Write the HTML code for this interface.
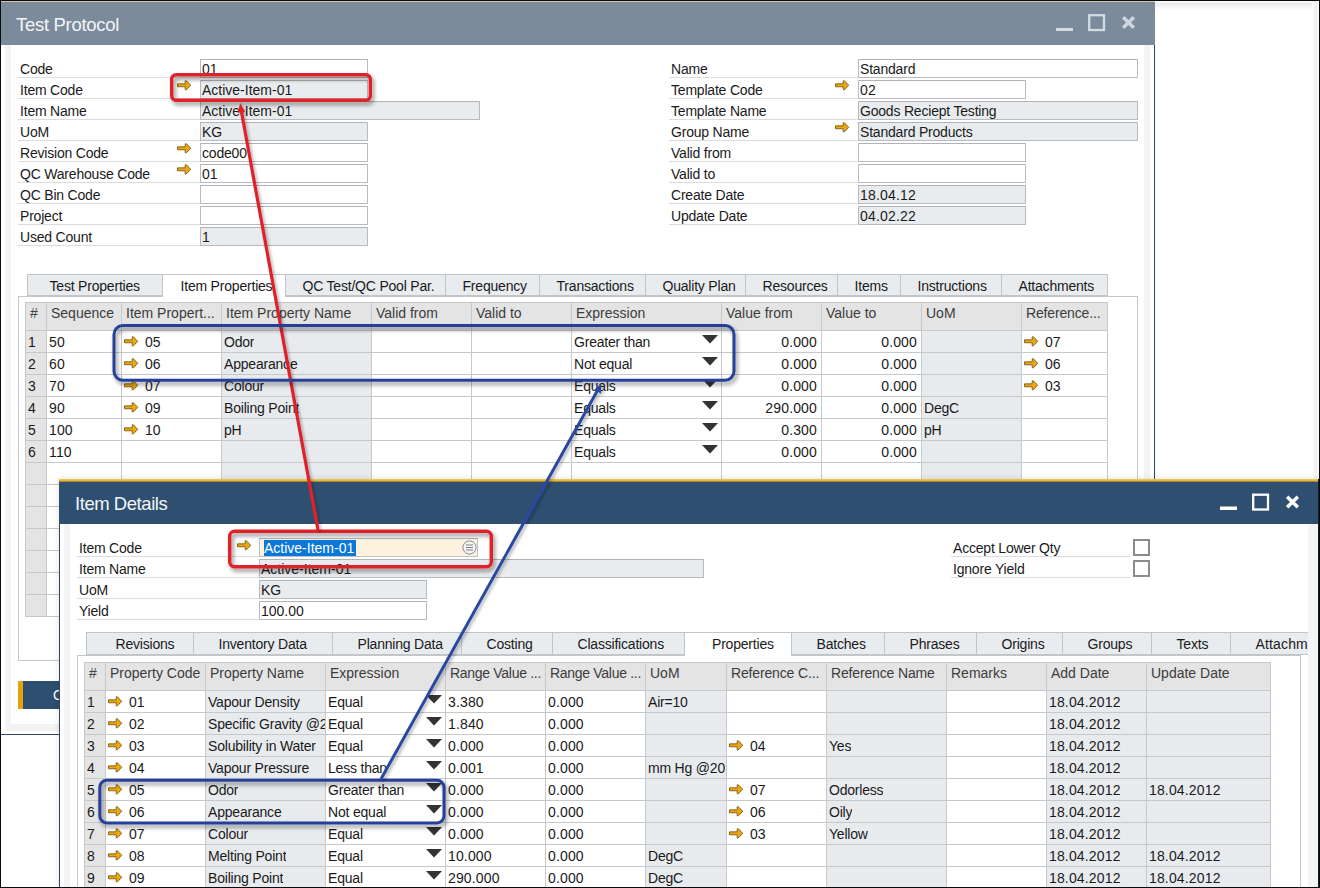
<!DOCTYPE html>
<html><head><meta charset="utf-8"><title>Test Protocol</title>
<style>
html,body{margin:0;padding:0;background:#fff;}
body{width:1320px;height:888px;overflow:hidden;position:relative;font-family:"Liberation Sans",Arial,sans-serif;}
#root{position:absolute;left:0;top:0;width:1320px;height:888px;overflow:hidden;}
#root div{position:absolute;box-sizing:border-box;}
.t{position:absolute;white-space:nowrap;display:block;}
.lk{position:absolute;display:block;overflow:visible;}
.in{border:1px solid #b8babd;border-top-color:#b0b2b5;border-radius:1px;background:#fff;}
.in.g{background:#e9ecee;}
.ul{background:#dcdcdc;height:1px;}
.tab{background:#e9ecef;border:1px solid #c2c5c8;}
.tab.a{background:#fff;border-bottom:none;}
svg.ov{position:absolute;left:0;top:0;}
</style></head><body><div id="root">

<div style="left:0px;top:0px;width:1320px;height:888px;background:#fff;"></div>
<div style="left:1155px;top:1px;width:164px;height:9px;background:linear-gradient(#fff 0,#ececec 30%,#f4f4f4 60%,#fff 100%);"></div>
<div style="left:1312px;top:1px;width:7px;height:478px;background:linear-gradient(90deg,#fff 0,#f0f0f0 60%,#fff 100%);"></div>
<div style="left:0px;top:0px;width:1155px;height:735px;background:#fff;"></div>
<div style="left:5px;top:45px;width:6px;height:686px;background:#f3f3f3;"></div>
<div style="left:1144px;top:45px;width:6px;height:686px;background:#f3f3f3;"></div>
<div style="left:5px;top:724px;width:1145px;height:7px;background:#f3f3f3;"></div>
<div style="left:0px;top:0px;width:1px;height:735px;background:#1c1c1c;"></div>
<div style="left:1154px;top:45px;width:1px;height:690px;background:#2d4868;"></div>
<div style="left:0px;top:734px;width:1155px;height:1px;background:#2d4868;"></div>
<div style="left:0px;top:2px;width:1155px;height:43px;background:#7b8b9b;"></div>
<span class="t" style="left:16px;top:14.09px;font-size:18.5px;line-height:21px;color:#f2f5f8;letter-spacing:-0.3px;">Test Protocol</span>
<svg class="lk" style="left:1050px;top:8px" width="95" height="30" viewBox="1050 8 95 30"><rect x="1056" y="28" width="17" height="3" fill="#d3dbe3"/><rect x="1089.2" y="15.2" width="14.8" height="14.8" fill="none" stroke="#d3dbe3" stroke-width="2.3"/><path d="M1123.2 17.2 L1133.8 27.8 M1133.8 17.2 L1123.2 27.8" stroke="#ccd5de" stroke-width="3.5" fill="none"/></svg>
<span class="t" style="left:20px;top:61.15px;font-size:14px;line-height:16px;color:#1a1a1a;letter-spacing:-0.2px;">Code</span>
<div class="ul" style="left:18px;top:77px;width:182px;height:1px;"></div>
<div class="in" style="left:200px;top:59px;width:168px;height:19px;"></div>
<span class="t" style="left:202px;top:61.15px;font-size:14px;line-height:16px;color:#1a1a1a;letter-spacing:0px;">01</span>
<span class="t" style="left:20px;top:82.15px;font-size:14px;line-height:16px;color:#1a1a1a;letter-spacing:-0.2px;">Item Code</span>
<div class="ul" style="left:18px;top:98px;width:182px;height:1px;"></div>
<div class="in g" style="left:200px;top:80px;width:168px;height:19px;"></div>
<span class="t" style="left:202px;top:82.15px;font-size:14px;line-height:16px;color:#1a1a1a;letter-spacing:0px;">Active-Item-01</span>
<svg class="lk" style="left:176.5px;top:79.7px" width="15" height="11" viewBox="0 0 15 11"><path d="M0.5 3.85 H8.2 V0.8 H9.4 L13.7 5.3 L9.4 9.8 H8.2 V6.75 H0.5 Z" fill="#eda610" stroke="#7a5c14" stroke-width="0.9" stroke-linejoin="round"/></svg>
<span class="t" style="left:20px;top:103.15px;font-size:14px;line-height:16px;color:#1a1a1a;letter-spacing:-0.2px;">Item Name</span>
<div class="ul" style="left:18px;top:119px;width:182px;height:1px;"></div>
<div class="in g" style="left:200px;top:101px;width:280px;height:19px;"></div>
<span class="t" style="left:202px;top:103.15px;font-size:14px;line-height:16px;color:#1a1a1a;letter-spacing:0px;">Active-Item-01</span>
<span class="t" style="left:20px;top:124.15px;font-size:14px;line-height:16px;color:#1a1a1a;letter-spacing:-0.2px;">UoM</span>
<div class="ul" style="left:18px;top:140px;width:182px;height:1px;"></div>
<div class="in g" style="left:200px;top:122px;width:168px;height:19px;"></div>
<span class="t" style="left:202px;top:124.15px;font-size:14px;line-height:16px;color:#1a1a1a;letter-spacing:-0.2px;">KG</span>
<span class="t" style="left:20px;top:145.15px;font-size:14px;line-height:16px;color:#1a1a1a;letter-spacing:-0.2px;">Revision Code</span>
<div class="ul" style="left:18px;top:161px;width:182px;height:1px;"></div>
<div class="in" style="left:200px;top:143px;width:168px;height:19px;"></div>
<span class="t" style="left:202px;top:145.15px;font-size:14px;line-height:16px;color:#1a1a1a;letter-spacing:-0.2px;">code00</span>
<svg class="lk" style="left:176.5px;top:142.7px" width="15" height="11" viewBox="0 0 15 11"><path d="M0.5 3.85 H8.2 V0.8 H9.4 L13.7 5.3 L9.4 9.8 H8.2 V6.75 H0.5 Z" fill="#eda610" stroke="#7a5c14" stroke-width="0.9" stroke-linejoin="round"/></svg>
<span class="t" style="left:20px;top:166.15px;font-size:14px;line-height:16px;color:#1a1a1a;letter-spacing:-0.2px;">QC Warehouse Code</span>
<div class="ul" style="left:18px;top:182px;width:182px;height:1px;"></div>
<div class="in" style="left:200px;top:164px;width:168px;height:19px;"></div>
<span class="t" style="left:202px;top:166.15px;font-size:14px;line-height:16px;color:#1a1a1a;letter-spacing:0px;">01</span>
<svg class="lk" style="left:176.5px;top:163.7px" width="15" height="11" viewBox="0 0 15 11"><path d="M0.5 3.85 H8.2 V0.8 H9.4 L13.7 5.3 L9.4 9.8 H8.2 V6.75 H0.5 Z" fill="#eda610" stroke="#7a5c14" stroke-width="0.9" stroke-linejoin="round"/></svg>
<span class="t" style="left:20px;top:187.15px;font-size:14px;line-height:16px;color:#1a1a1a;letter-spacing:-0.2px;">QC Bin Code</span>
<div class="ul" style="left:18px;top:203px;width:182px;height:1px;"></div>
<div class="in" style="left:200px;top:185px;width:168px;height:19px;"></div>
<span class="t" style="left:20px;top:208.15px;font-size:14px;line-height:16px;color:#1a1a1a;letter-spacing:-0.2px;">Project</span>
<div class="ul" style="left:18px;top:224px;width:182px;height:1px;"></div>
<div class="in" style="left:200px;top:206px;width:168px;height:19px;"></div>
<span class="t" style="left:20px;top:229.15px;font-size:14px;line-height:16px;color:#1a1a1a;letter-spacing:-0.2px;">Used Count</span>
<div class="ul" style="left:18px;top:245px;width:182px;height:1px;"></div>
<div class="in g" style="left:200px;top:227px;width:168px;height:19px;"></div>
<span class="t" style="left:202px;top:229.15px;font-size:14px;line-height:16px;color:#1a1a1a;letter-spacing:0px;">1</span>
<span class="t" style="left:671px;top:61.15px;font-size:14px;line-height:16px;color:#1a1a1a;letter-spacing:-0.2px;">Name</span>
<div class="ul" style="left:669px;top:77px;width:189px;height:1px;"></div>
<div class="in" style="left:858px;top:59px;width:280px;height:19px;"></div>
<span class="t" style="left:860px;top:61.15px;font-size:14px;line-height:16px;color:#1a1a1a;letter-spacing:-0.2px;">Standard</span>
<span class="t" style="left:671px;top:82.15px;font-size:14px;line-height:16px;color:#1a1a1a;letter-spacing:-0.2px;">Template Code</span>
<div class="ul" style="left:669px;top:98px;width:189px;height:1px;"></div>
<div class="in" style="left:858px;top:80px;width:168px;height:19px;"></div>
<span class="t" style="left:860px;top:82.15px;font-size:14px;line-height:16px;color:#1a1a1a;letter-spacing:0.2px;">02</span>
<svg class="lk" style="left:834.5px;top:79.7px" width="15" height="11" viewBox="0 0 15 11"><path d="M0.5 3.85 H8.2 V0.8 H9.4 L13.7 5.3 L9.4 9.8 H8.2 V6.75 H0.5 Z" fill="#eda610" stroke="#7a5c14" stroke-width="0.9" stroke-linejoin="round"/></svg>
<span class="t" style="left:671px;top:103.15px;font-size:14px;line-height:16px;color:#1a1a1a;letter-spacing:-0.2px;">Template Name</span>
<div class="ul" style="left:669px;top:119px;width:189px;height:1px;"></div>
<div class="in g" style="left:858px;top:101px;width:280px;height:19px;"></div>
<span class="t" style="left:860px;top:103.15px;font-size:14px;line-height:16px;color:#1a1a1a;letter-spacing:-0.2px;">Goods Reciept Testing</span>
<span class="t" style="left:671px;top:124.15px;font-size:14px;line-height:16px;color:#1a1a1a;letter-spacing:-0.2px;">Group Name</span>
<div class="ul" style="left:669px;top:140px;width:189px;height:1px;"></div>
<div class="in g" style="left:858px;top:122px;width:280px;height:19px;"></div>
<span class="t" style="left:860px;top:124.15px;font-size:14px;line-height:16px;color:#1a1a1a;letter-spacing:-0.2px;">Standard Products</span>
<svg class="lk" style="left:834.5px;top:121.7px" width="15" height="11" viewBox="0 0 15 11"><path d="M0.5 3.85 H8.2 V0.8 H9.4 L13.7 5.3 L9.4 9.8 H8.2 V6.75 H0.5 Z" fill="#eda610" stroke="#7a5c14" stroke-width="0.9" stroke-linejoin="round"/></svg>
<span class="t" style="left:671px;top:145.15px;font-size:14px;line-height:16px;color:#1a1a1a;letter-spacing:-0.2px;">Valid from</span>
<div class="ul" style="left:669px;top:161px;width:189px;height:1px;"></div>
<div class="in" style="left:858px;top:143px;width:168px;height:19px;"></div>
<span class="t" style="left:671px;top:166.15px;font-size:14px;line-height:16px;color:#1a1a1a;letter-spacing:-0.2px;">Valid to</span>
<div class="ul" style="left:669px;top:182px;width:189px;height:1px;"></div>
<div class="in" style="left:858px;top:164px;width:168px;height:19px;"></div>
<span class="t" style="left:671px;top:187.15px;font-size:14px;line-height:16px;color:#1a1a1a;letter-spacing:-0.2px;">Create Date</span>
<div class="ul" style="left:669px;top:203px;width:189px;height:1px;"></div>
<div class="in g" style="left:858px;top:185px;width:168px;height:19px;"></div>
<span class="t" style="left:860px;top:187.15px;font-size:14px;line-height:16px;color:#1a1a1a;letter-spacing:0.2px;">18.04.12</span>
<span class="t" style="left:671px;top:208.15px;font-size:14px;line-height:16px;color:#1a1a1a;letter-spacing:-0.2px;">Update Date</span>
<div class="ul" style="left:669px;top:224px;width:189px;height:1px;"></div>
<div class="in g" style="left:858px;top:206px;width:168px;height:19px;"></div>
<span class="t" style="left:860px;top:208.15px;font-size:14px;line-height:16px;color:#1a1a1a;letter-spacing:0.2px;">04.02.22</span>
<div style="left:18px;top:296px;width:1120px;height:365px;border:1px solid #c4c6c8;background:#fff;"></div>
<div class="tab" style="left:27px;top:274px;width:136px;height:22px;"></div>
<div class="tab a" style="left:162px;top:274px;width:124px;height:23px;"></div>
<div class="tab" style="left:285px;top:274px;width:161px;height:22px;"></div>
<div class="tab" style="left:445px;top:274px;width:95px;height:22px;"></div>
<div class="tab" style="left:539px;top:274px;width:107px;height:22px;"></div>
<div class="tab" style="left:645px;top:274px;width:101px;height:22px;"></div>
<div class="tab" style="left:745px;top:274px;width:93px;height:22px;"></div>
<div class="tab" style="left:837px;top:274px;width:64px;height:22px;"></div>
<div class="tab" style="left:900px;top:274px;width:102px;height:22px;"></div>
<div class="tab" style="left:1001px;top:274px;width:107px;height:22px;"></div>
<span class="t" style="left:49.5px;top:278.15px;font-size:14px;line-height:16px;color:#1a1a1a;letter-spacing:-0.2px;">Test Properties</span>
<span class="t" style="left:180.5px;top:278.15px;font-size:14px;line-height:16px;color:#1a1a1a;letter-spacing:-0.2px;">Item Properties</span>
<span class="t" style="left:302.5px;top:278.15px;font-size:14px;line-height:16px;color:#1a1a1a;letter-spacing:-0.2px;">QC Test/QC Pool Par.</span>
<span class="t" style="left:462.5px;top:278.15px;font-size:14px;line-height:16px;color:#1a1a1a;letter-spacing:-0.2px;">Frequency</span>
<span class="t" style="left:556.5px;top:278.15px;font-size:14px;line-height:16px;color:#1a1a1a;letter-spacing:-0.2px;">Transactions</span>
<span class="t" style="left:662.5px;top:278.15px;font-size:14px;line-height:16px;color:#1a1a1a;letter-spacing:-0.2px;">Quality Plan</span>
<span class="t" style="left:762.5px;top:278.15px;font-size:14px;line-height:16px;color:#1a1a1a;letter-spacing:-0.2px;">Resources</span>
<span class="t" style="left:854.5px;top:278.15px;font-size:14px;line-height:16px;color:#1a1a1a;letter-spacing:-0.2px;">Items</span>
<span class="t" style="left:917.5px;top:278.15px;font-size:14px;line-height:16px;color:#1a1a1a;letter-spacing:-0.2px;">Instructions</span>
<span class="t" style="left:1018.5px;top:278.15px;font-size:14px;line-height:16px;color:#1a1a1a;letter-spacing:-0.2px;">Attachments</span>
<div style="left:25px;top:330px;width:21px;height:286px;background:#e4e4e4;"></div>
<div style="left:46px;top:330px;width:75px;height:286px;background:#fff;"></div>
<div style="left:121px;top:330px;width:100px;height:286px;background:#fff;"></div>
<div style="left:221px;top:330px;width:150px;height:286px;background:#e8ebee;"></div>
<div style="left:371px;top:330px;width:100px;height:286px;background:#fff;"></div>
<div style="left:471px;top:330px;width:100px;height:286px;background:#fff;"></div>
<div style="left:571px;top:330px;width:150px;height:286px;background:#fff;"></div>
<div style="left:721px;top:330px;width:100px;height:286px;background:#fff;"></div>
<div style="left:821px;top:330px;width:100px;height:286px;background:#fff;"></div>
<div style="left:921px;top:330px;width:100px;height:286px;background:#e8ebee;"></div>
<div style="left:1021px;top:330px;width:86px;height:286px;background:#fff;"></div>
<div style="left:25px;top:302px;width:1082px;height:28px;background:#e4e4e4;"></div>
<div style="left:25px;top:302px;width:1px;height:314px;background:#c6c8ca;"></div>
<div style="left:46px;top:302px;width:1px;height:314px;background:#c6c8ca;"></div>
<div style="left:121px;top:302px;width:1px;height:314px;background:#c6c8ca;"></div>
<div style="left:221px;top:302px;width:1px;height:314px;background:#c6c8ca;"></div>
<div style="left:371px;top:302px;width:1px;height:314px;background:#c6c8ca;"></div>
<div style="left:471px;top:302px;width:1px;height:314px;background:#c6c8ca;"></div>
<div style="left:571px;top:302px;width:1px;height:314px;background:#c6c8ca;"></div>
<div style="left:721px;top:302px;width:1px;height:314px;background:#c6c8ca;"></div>
<div style="left:821px;top:302px;width:1px;height:314px;background:#c6c8ca;"></div>
<div style="left:921px;top:302px;width:1px;height:314px;background:#c6c8ca;"></div>
<div style="left:1021px;top:302px;width:1px;height:314px;background:#c6c8ca;"></div>
<div style="left:1107px;top:302px;width:1px;height:314px;background:#c6c8ca;"></div>
<div style="left:25px;top:302px;width:1083px;height:1px;background:#c6c8ca;"></div>
<div style="left:25px;top:330px;width:1083px;height:1px;background:#c6c8ca;"></div>
<div style="left:25px;top:352px;width:1083px;height:1px;background:#c6c8ca;"></div>
<div style="left:25px;top:374px;width:1083px;height:1px;background:#c6c8ca;"></div>
<div style="left:25px;top:396px;width:1083px;height:1px;background:#c6c8ca;"></div>
<div style="left:25px;top:418px;width:1083px;height:1px;background:#c6c8ca;"></div>
<div style="left:25px;top:440px;width:1083px;height:1px;background:#c6c8ca;"></div>
<div style="left:25px;top:462px;width:1083px;height:1px;background:#c6c8ca;"></div>
<div style="left:25px;top:484px;width:1083px;height:1px;background:#c6c8ca;"></div>
<div style="left:25px;top:506px;width:1083px;height:1px;background:#c6c8ca;"></div>
<div style="left:25px;top:528px;width:1083px;height:1px;background:#c6c8ca;"></div>
<div style="left:25px;top:550px;width:1083px;height:1px;background:#c6c8ca;"></div>
<div style="left:25px;top:572px;width:1083px;height:1px;background:#c6c8ca;"></div>
<div style="left:25px;top:594px;width:1083px;height:1px;background:#c6c8ca;"></div>
<div style="left:25px;top:616px;width:1083px;height:1px;background:#c6c8ca;"></div>
<span class="t" style="left:30px;top:305.15px;font-size:14px;line-height:16px;color:#444;letter-spacing:-0.2px;">#</span>
<span class="t" style="left:51px;top:305.15px;font-size:14px;line-height:16px;color:#3c3c3c;letter-spacing:0px;">Sequence</span>
<span class="t" style="left:126px;top:305.15px;font-size:14px;line-height:16px;color:#3c3c3c;letter-spacing:0px;">Item Propert...</span>
<span class="t" style="left:226px;top:305.15px;font-size:14px;line-height:16px;color:#3c3c3c;letter-spacing:0px;">Item Property Name</span>
<span class="t" style="left:376px;top:305.15px;font-size:14px;line-height:16px;color:#3c3c3c;letter-spacing:0px;">Valid from</span>
<span class="t" style="left:476px;top:305.15px;font-size:14px;line-height:16px;color:#3c3c3c;letter-spacing:0px;">Valid to</span>
<span class="t" style="left:576px;top:305.15px;font-size:14px;line-height:16px;color:#3c3c3c;letter-spacing:0px;">Expression</span>
<span class="t" style="left:726px;top:305.15px;font-size:14px;line-height:16px;color:#3c3c3c;letter-spacing:0px;">Value from</span>
<span class="t" style="left:826px;top:305.15px;font-size:14px;line-height:16px;color:#3c3c3c;letter-spacing:0px;">Value to</span>
<span class="t" style="left:926px;top:305.15px;font-size:14px;line-height:16px;color:#3c3c3c;letter-spacing:0px;">UoM</span>
<span class="t" style="left:1026px;top:305.15px;font-size:14px;line-height:16px;color:#3c3c3c;letter-spacing:-0.15px;">Reference...</span>
<span class="t" style="left:28px;top:333.65px;font-size:14px;line-height:16px;color:#1a1a1a;letter-spacing:0.15px;max-width:18px;overflow:hidden;">1</span>
<span class="t" style="left:49px;top:333.65px;font-size:14px;line-height:16px;color:#1a1a1a;letter-spacing:0.15px;max-width:72px;overflow:hidden;">50</span>
<svg class="lk" style="left:124px;top:335.5px" width="15" height="11" viewBox="0 0 15 11"><path d="M0.5 3.85 H8.2 V0.8 H9.4 L13.7 5.3 L9.4 9.8 H8.2 V6.75 H0.5 Z" fill="#eda610" stroke="#7a5c14" stroke-width="0.9" stroke-linejoin="round"/></svg>
<span class="t" style="left:145px;top:333.65px;font-size:14px;line-height:16px;color:#1a1a1a;letter-spacing:0px;">05</span>
<span class="t" style="left:224px;top:333.65px;font-size:14px;line-height:16px;color:#1a1a1a;letter-spacing:-0.2px;max-width:147px;overflow:hidden;">Odor</span>
<span class="t" style="left:574px;top:333.65px;font-size:14px;line-height:16px;color:#1a1a1a;letter-spacing:-0.2px;max-width:147px;overflow:hidden;">Greater than</span>
<svg class="lk" style="left:702px;top:335px" width="16" height="9" viewBox="0 0 16 9"><path d="M0 0 H16 L8 8.6 Z" fill="#333"/></svg>
<span class="t" style="right:503px;top:333.65px;font-size:14px;line-height:16px;color:#1a1a1a;letter-spacing:0.15px;">0.000</span>
<span class="t" style="right:403px;top:333.65px;font-size:14px;line-height:16px;color:#1a1a1a;letter-spacing:0.15px;">0.000</span>
<svg class="lk" style="left:1024px;top:335.5px" width="15" height="11" viewBox="0 0 15 11"><path d="M0.5 3.85 H8.2 V0.8 H9.4 L13.7 5.3 L9.4 9.8 H8.2 V6.75 H0.5 Z" fill="#eda610" stroke="#7a5c14" stroke-width="0.9" stroke-linejoin="round"/></svg>
<span class="t" style="left:1045px;top:333.65px;font-size:14px;line-height:16px;color:#1a1a1a;letter-spacing:0px;">07</span>
<span class="t" style="left:28px;top:355.65px;font-size:14px;line-height:16px;color:#1a1a1a;letter-spacing:0.15px;max-width:18px;overflow:hidden;">2</span>
<span class="t" style="left:49px;top:355.65px;font-size:14px;line-height:16px;color:#1a1a1a;letter-spacing:0.15px;max-width:72px;overflow:hidden;">60</span>
<svg class="lk" style="left:124px;top:357.5px" width="15" height="11" viewBox="0 0 15 11"><path d="M0.5 3.85 H8.2 V0.8 H9.4 L13.7 5.3 L9.4 9.8 H8.2 V6.75 H0.5 Z" fill="#eda610" stroke="#7a5c14" stroke-width="0.9" stroke-linejoin="round"/></svg>
<span class="t" style="left:145px;top:355.65px;font-size:14px;line-height:16px;color:#1a1a1a;letter-spacing:0px;">06</span>
<span class="t" style="left:224px;top:355.65px;font-size:14px;line-height:16px;color:#1a1a1a;letter-spacing:-0.2px;max-width:147px;overflow:hidden;">Appearance</span>
<span class="t" style="left:574px;top:355.65px;font-size:14px;line-height:16px;color:#1a1a1a;letter-spacing:-0.2px;max-width:147px;overflow:hidden;">Not equal</span>
<svg class="lk" style="left:702px;top:357px" width="16" height="9" viewBox="0 0 16 9"><path d="M0 0 H16 L8 8.6 Z" fill="#333"/></svg>
<span class="t" style="right:503px;top:355.65px;font-size:14px;line-height:16px;color:#1a1a1a;letter-spacing:0.15px;">0.000</span>
<span class="t" style="right:403px;top:355.65px;font-size:14px;line-height:16px;color:#1a1a1a;letter-spacing:0.15px;">0.000</span>
<svg class="lk" style="left:1024px;top:357.5px" width="15" height="11" viewBox="0 0 15 11"><path d="M0.5 3.85 H8.2 V0.8 H9.4 L13.7 5.3 L9.4 9.8 H8.2 V6.75 H0.5 Z" fill="#eda610" stroke="#7a5c14" stroke-width="0.9" stroke-linejoin="round"/></svg>
<span class="t" style="left:1045px;top:355.65px;font-size:14px;line-height:16px;color:#1a1a1a;letter-spacing:0px;">06</span>
<span class="t" style="left:28px;top:377.65px;font-size:14px;line-height:16px;color:#1a1a1a;letter-spacing:0.15px;max-width:18px;overflow:hidden;">3</span>
<span class="t" style="left:49px;top:377.65px;font-size:14px;line-height:16px;color:#1a1a1a;letter-spacing:0.15px;max-width:72px;overflow:hidden;">70</span>
<svg class="lk" style="left:124px;top:379.5px" width="15" height="11" viewBox="0 0 15 11"><path d="M0.5 3.85 H8.2 V0.8 H9.4 L13.7 5.3 L9.4 9.8 H8.2 V6.75 H0.5 Z" fill="#eda610" stroke="#7a5c14" stroke-width="0.9" stroke-linejoin="round"/></svg>
<span class="t" style="left:145px;top:377.65px;font-size:14px;line-height:16px;color:#1a1a1a;letter-spacing:0px;">07</span>
<span class="t" style="left:224px;top:377.65px;font-size:14px;line-height:16px;color:#1a1a1a;letter-spacing:-0.2px;max-width:147px;overflow:hidden;">Colour</span>
<span class="t" style="left:574px;top:377.65px;font-size:14px;line-height:16px;color:#1a1a1a;letter-spacing:-0.2px;max-width:147px;overflow:hidden;">Equals</span>
<svg class="lk" style="left:702px;top:379px" width="16" height="9" viewBox="0 0 16 9"><path d="M0 0 H16 L8 8.6 Z" fill="#333"/></svg>
<span class="t" style="right:503px;top:377.65px;font-size:14px;line-height:16px;color:#1a1a1a;letter-spacing:0.15px;">0.000</span>
<span class="t" style="right:403px;top:377.65px;font-size:14px;line-height:16px;color:#1a1a1a;letter-spacing:0.15px;">0.000</span>
<svg class="lk" style="left:1024px;top:379.5px" width="15" height="11" viewBox="0 0 15 11"><path d="M0.5 3.85 H8.2 V0.8 H9.4 L13.7 5.3 L9.4 9.8 H8.2 V6.75 H0.5 Z" fill="#eda610" stroke="#7a5c14" stroke-width="0.9" stroke-linejoin="round"/></svg>
<span class="t" style="left:1045px;top:377.65px;font-size:14px;line-height:16px;color:#1a1a1a;letter-spacing:0px;">03</span>
<span class="t" style="left:28px;top:399.65px;font-size:14px;line-height:16px;color:#1a1a1a;letter-spacing:0.15px;max-width:18px;overflow:hidden;">4</span>
<span class="t" style="left:49px;top:399.65px;font-size:14px;line-height:16px;color:#1a1a1a;letter-spacing:0.15px;max-width:72px;overflow:hidden;">90</span>
<svg class="lk" style="left:124px;top:401.5px" width="15" height="11" viewBox="0 0 15 11"><path d="M0.5 3.85 H8.2 V0.8 H9.4 L13.7 5.3 L9.4 9.8 H8.2 V6.75 H0.5 Z" fill="#eda610" stroke="#7a5c14" stroke-width="0.9" stroke-linejoin="round"/></svg>
<span class="t" style="left:145px;top:399.65px;font-size:14px;line-height:16px;color:#1a1a1a;letter-spacing:0px;">09</span>
<span class="t" style="left:224px;top:399.65px;font-size:14px;line-height:16px;color:#1a1a1a;letter-spacing:-0.2px;max-width:147px;overflow:hidden;">Boiling Point</span>
<span class="t" style="left:574px;top:399.65px;font-size:14px;line-height:16px;color:#1a1a1a;letter-spacing:-0.2px;max-width:147px;overflow:hidden;">Equals</span>
<svg class="lk" style="left:702px;top:401px" width="16" height="9" viewBox="0 0 16 9"><path d="M0 0 H16 L8 8.6 Z" fill="#333"/></svg>
<span class="t" style="right:503px;top:399.65px;font-size:14px;line-height:16px;color:#1a1a1a;letter-spacing:0.15px;">290.000</span>
<span class="t" style="right:403px;top:399.65px;font-size:14px;line-height:16px;color:#1a1a1a;letter-spacing:0.15px;">0.000</span>
<span class="t" style="left:924px;top:399.65px;font-size:14px;line-height:16px;color:#1a1a1a;letter-spacing:-0.2px;max-width:97px;overflow:hidden;">DegC</span>
<span class="t" style="left:28px;top:421.65px;font-size:14px;line-height:16px;color:#1a1a1a;letter-spacing:0.15px;max-width:18px;overflow:hidden;">5</span>
<span class="t" style="left:49px;top:421.65px;font-size:14px;line-height:16px;color:#1a1a1a;letter-spacing:0.15px;max-width:72px;overflow:hidden;">100</span>
<svg class="lk" style="left:124px;top:423.5px" width="15" height="11" viewBox="0 0 15 11"><path d="M0.5 3.85 H8.2 V0.8 H9.4 L13.7 5.3 L9.4 9.8 H8.2 V6.75 H0.5 Z" fill="#eda610" stroke="#7a5c14" stroke-width="0.9" stroke-linejoin="round"/></svg>
<span class="t" style="left:145px;top:421.65px;font-size:14px;line-height:16px;color:#1a1a1a;letter-spacing:0px;">10</span>
<span class="t" style="left:224px;top:421.65px;font-size:14px;line-height:16px;color:#1a1a1a;letter-spacing:-0.2px;max-width:147px;overflow:hidden;">pH</span>
<span class="t" style="left:574px;top:421.65px;font-size:14px;line-height:16px;color:#1a1a1a;letter-spacing:-0.2px;max-width:147px;overflow:hidden;">Equals</span>
<svg class="lk" style="left:702px;top:423px" width="16" height="9" viewBox="0 0 16 9"><path d="M0 0 H16 L8 8.6 Z" fill="#333"/></svg>
<span class="t" style="right:503px;top:421.65px;font-size:14px;line-height:16px;color:#1a1a1a;letter-spacing:0.15px;">0.300</span>
<span class="t" style="right:403px;top:421.65px;font-size:14px;line-height:16px;color:#1a1a1a;letter-spacing:0.15px;">0.000</span>
<span class="t" style="left:924px;top:421.65px;font-size:14px;line-height:16px;color:#1a1a1a;letter-spacing:-0.2px;max-width:97px;overflow:hidden;">pH</span>
<span class="t" style="left:28px;top:443.65px;font-size:14px;line-height:16px;color:#1a1a1a;letter-spacing:0.15px;max-width:18px;overflow:hidden;">6</span>
<span class="t" style="left:49px;top:443.65px;font-size:14px;line-height:16px;color:#1a1a1a;letter-spacing:0.15px;max-width:72px;overflow:hidden;">110</span>
<span class="t" style="left:574px;top:443.65px;font-size:14px;line-height:16px;color:#1a1a1a;letter-spacing:-0.2px;max-width:147px;overflow:hidden;">Equals</span>
<svg class="lk" style="left:702px;top:445px" width="16" height="9" viewBox="0 0 16 9"><path d="M0 0 H16 L8 8.6 Z" fill="#333"/></svg>
<span class="t" style="right:503px;top:443.65px;font-size:14px;line-height:16px;color:#1a1a1a;letter-spacing:0.15px;">0.000</span>
<span class="t" style="right:403px;top:443.65px;font-size:14px;line-height:16px;color:#1a1a1a;letter-spacing:0.15px;">0.000</span>
<div style="left:18px;top:681px;width:90px;height:28px;background:#2d4e6e;"></div>
<div style="left:18px;top:681px;width:5px;height:28px;background:#e2a40a;"></div>
<span class="t" style="left:53px;top:687.15px;font-size:14px;line-height:16px;color:#fff;letter-spacing:0px;">OK</span>
<div style="left:59px;top:479px;width:1261px;height:409px;background:#fff;box-shadow:0 0 6px rgba(0,0,0,0.13);"></div>
<div style="left:59px;top:481px;width:1261px;height:43px;background:#2e4f70;"></div>
<div style="left:59px;top:479px;width:1261px;height:3px;background:linear-gradient(#f2cc52 0,#e4b43c 55%,#8a7434 100%);"></div>
<div style="left:59px;top:524px;width:1px;height:364px;background:#2d4868;"></div>
<div style="left:64px;top:524px;width:6px;height:364px;background:#f3f3f3;"></div>
<div style="left:1308px;top:524px;width:10px;height:364px;background:#f5f5f5;"></div>
<span class="t" style="left:75px;top:493.09px;font-size:18.5px;line-height:21px;color:#f2f5f8;letter-spacing:-0.45px;">Item Details</span>
<svg class="lk" style="left:1214px;top:488px" width="95" height="30" viewBox="1214 488 95 30"><rect x="1220" y="506.5" width="17" height="3.5" fill="#fff"/><rect x="1253.2" y="494.7" width="14.8" height="14.8" fill="none" stroke="#fff" stroke-width="2.3"/><path d="M1287.2 496.7 L1297.8 507.3 M1297.8 496.7 L1287.2 507.3" stroke="#fff" stroke-width="3.5" fill="none"/></svg>
<span class="t" style="left:79px;top:540.15px;font-size:14px;line-height:16px;color:#1a1a1a;letter-spacing:-0.2px;">Item Code</span>
<div class="ul" style="left:77px;top:556px;width:182px;height:1px;"></div>
<div style="left:259px;top:538px;width:219px;height:19px;background:#fdf2de;border:1px solid #bcc0c4;border-top-color:#b0b4b8;"></div>
<span class="t" style="left:79px;top:561.15px;font-size:14px;line-height:16px;color:#1a1a1a;letter-spacing:-0.2px;">Item Name</span>
<div class="ul" style="left:77px;top:577px;width:182px;height:1px;"></div>
<div class="in g" style="left:259px;top:559px;width:445px;height:19px;"></div>
<span class="t" style="left:261px;top:561.15px;font-size:14px;line-height:16px;color:#1a1a1a;letter-spacing:0px;">Active-Item-01</span>
<span class="t" style="left:79px;top:582.15px;font-size:14px;line-height:16px;color:#1a1a1a;letter-spacing:-0.2px;">UoM</span>
<div class="ul" style="left:77px;top:598px;width:182px;height:1px;"></div>
<div class="in g" style="left:259px;top:580px;width:168px;height:19px;"></div>
<span class="t" style="left:261px;top:582.15px;font-size:14px;line-height:16px;color:#1a1a1a;letter-spacing:-0.2px;">KG</span>
<span class="t" style="left:79px;top:603.15px;font-size:14px;line-height:16px;color:#1a1a1a;letter-spacing:-0.2px;">Yield</span>
<div class="ul" style="left:77px;top:619px;width:182px;height:1px;"></div>
<div class="in" style="left:259px;top:601px;width:168px;height:19px;"></div>
<span class="t" style="left:261px;top:603.15px;font-size:14px;line-height:16px;color:#1a1a1a;letter-spacing:0px;">100.00</span>
<div style="left:264px;top:540px;width:92px;height:16px;background:#0b78d7;"></div>
<span class="t" style="left:264px;top:540.15px;font-size:14px;line-height:16px;color:#fff;letter-spacing:0px;">Active-Item-01</span>
<svg class="lk" style="left:462px;top:540px" width="15" height="15" viewBox="0 0 15 15"><circle cx="7.5" cy="7.5" r="6.6" fill="#f4f4f4" stroke="#8c8c8c" stroke-width="1"/><path d="M4 5 H11 M4 7.5 H11 M4 10 H11" stroke="#808080" stroke-width="1"/></svg>
<svg class="lk" style="left:236.5px;top:539.7px" width="15" height="11" viewBox="0 0 15 11"><path d="M0.5 3.85 H8.2 V0.8 H9.4 L13.7 5.3 L9.4 9.8 H8.2 V6.75 H0.5 Z" fill="#eda610" stroke="#7a5c14" stroke-width="0.9" stroke-linejoin="round"/></svg>
<span class="t" style="left:953px;top:540.15px;font-size:14px;line-height:16px;color:#1a1a1a;letter-spacing:-0.2px;">Accept Lower Qty</span>
<div class="ul" style="left:951px;top:556px;width:179px;height:1px;"></div>
<div style="left:1133px;top:539px;width:17px;height:17px;border:2px solid #8c8c8c;background:#fff;"></div>
<span class="t" style="left:953px;top:561.15px;font-size:14px;line-height:16px;color:#1a1a1a;letter-spacing:-0.2px;">Ignore Yield</span>
<div class="ul" style="left:951px;top:577px;width:179px;height:1px;"></div>
<div style="left:1133px;top:560px;width:17px;height:17px;border:2px solid #8c8c8c;background:#fff;"></div>
<div style="left:77px;top:655px;width:1224px;height:240px;border:1px solid #c4c6c8;background:#fff;"></div>
<div style="left:0;top:0;width:1308px;height:888px;overflow:hidden;">
<div class="tab" style="left:86px;top:632px;width:108px;height:23px;"></div>
<div class="tab" style="left:193px;top:632px;width:140px;height:23px;"></div>
<div class="tab" style="left:332px;top:632px;width:130px;height:23px;"></div>
<div class="tab" style="left:461px;top:632px;width:92px;height:23px;"></div>
<div class="tab" style="left:552px;top:632px;width:133px;height:23px;"></div>
<div class="tab a" style="left:684px;top:632px;width:108px;height:24px;"></div>
<div class="tab" style="left:791px;top:632px;width:94px;height:23px;"></div>
<div class="tab" style="left:884px;top:632px;width:93px;height:23px;"></div>
<div class="tab" style="left:976px;top:632px;width:87px;height:23px;"></div>
<div class="tab" style="left:1062px;top:632px;width:90px;height:23px;"></div>
<div class="tab" style="left:1151px;top:632px;width:80px;height:23px;"></div>
<div class="tab" style="left:1230px;top:632px;width:101px;height:23px;"></div>
<span class="t" style="left:115.5px;top:636.15px;font-size:14px;line-height:16px;color:#1a1a1a;letter-spacing:-0.2px;">Revisions</span>
<span class="t" style="left:218.5px;top:636.15px;font-size:14px;line-height:16px;color:#1a1a1a;letter-spacing:-0.2px;">Inventory Data</span>
<span class="t" style="left:357.5px;top:636.15px;font-size:14px;line-height:16px;color:#1a1a1a;letter-spacing:-0.2px;">Planning Data</span>
<span class="t" style="left:486.5px;top:636.15px;font-size:14px;line-height:16px;color:#1a1a1a;letter-spacing:-0.2px;">Costing</span>
<span class="t" style="left:577.5px;top:636.15px;font-size:14px;line-height:16px;color:#1a1a1a;letter-spacing:-0.2px;">Classifications</span>
<span class="t" style="left:712px;top:636.15px;font-size:14px;line-height:16px;color:#1a1a1a;letter-spacing:-0.2px;">Properties</span>
<span class="t" style="left:816.5px;top:636.15px;font-size:14px;line-height:16px;color:#1a1a1a;letter-spacing:-0.2px;">Batches</span>
<span class="t" style="left:909.5px;top:636.15px;font-size:14px;line-height:16px;color:#1a1a1a;letter-spacing:-0.2px;">Phrases</span>
<span class="t" style="left:1001.5px;top:636.15px;font-size:14px;line-height:16px;color:#1a1a1a;letter-spacing:-0.2px;">Origins</span>
<span class="t" style="left:1087.5px;top:636.15px;font-size:14px;line-height:16px;color:#1a1a1a;letter-spacing:-0.2px;">Groups</span>
<span class="t" style="left:1176.5px;top:636.15px;font-size:14px;line-height:16px;color:#1a1a1a;letter-spacing:-0.2px;">Texts</span>
<span class="t" style="left:1255.5px;top:636.15px;font-size:14px;line-height:16px;color:#1a1a1a;letter-spacing:0.15px;">Attachments</span>
</div>
<div style="left:84px;top:690px;width:21px;height:220px;background:#e4e4e4;"></div>
<div style="left:105px;top:690px;width:100px;height:220px;background:#fff;"></div>
<div style="left:205px;top:690px;width:120px;height:220px;background:#e8ebee;"></div>
<div style="left:325px;top:690px;width:120px;height:220px;background:#fff;"></div>
<div style="left:445px;top:690px;width:100px;height:220px;background:#fff;"></div>
<div style="left:545px;top:690px;width:100px;height:220px;background:#fff;"></div>
<div style="left:645px;top:690px;width:81px;height:220px;background:#e8ebee;"></div>
<div style="left:726px;top:690px;width:100px;height:220px;background:#fff;"></div>
<div style="left:826px;top:690px;width:120px;height:220px;background:#e8ebee;"></div>
<div style="left:946px;top:690px;width:100px;height:220px;background:#fff;"></div>
<div style="left:1046px;top:690px;width:100px;height:220px;background:#e8ebee;"></div>
<div style="left:1146px;top:690px;width:124px;height:220px;background:#e8ebee;"></div>
<div style="left:84px;top:662px;width:1186px;height:28px;background:#e4e4e4;"></div>
<div style="left:84px;top:662px;width:1px;height:248px;background:#c6c8ca;"></div>
<div style="left:105px;top:662px;width:1px;height:248px;background:#c6c8ca;"></div>
<div style="left:205px;top:662px;width:1px;height:248px;background:#c6c8ca;"></div>
<div style="left:325px;top:662px;width:1px;height:248px;background:#c6c8ca;"></div>
<div style="left:445px;top:662px;width:1px;height:248px;background:#c6c8ca;"></div>
<div style="left:545px;top:662px;width:1px;height:248px;background:#c6c8ca;"></div>
<div style="left:645px;top:662px;width:1px;height:248px;background:#c6c8ca;"></div>
<div style="left:726px;top:662px;width:1px;height:248px;background:#c6c8ca;"></div>
<div style="left:826px;top:662px;width:1px;height:248px;background:#c6c8ca;"></div>
<div style="left:946px;top:662px;width:1px;height:248px;background:#c6c8ca;"></div>
<div style="left:1046px;top:662px;width:1px;height:248px;background:#c6c8ca;"></div>
<div style="left:1146px;top:662px;width:1px;height:248px;background:#c6c8ca;"></div>
<div style="left:1270px;top:662px;width:1px;height:248px;background:#c6c8ca;"></div>
<div style="left:84px;top:662px;width:1187px;height:1px;background:#c6c8ca;"></div>
<div style="left:84px;top:690px;width:1187px;height:1px;background:#c6c8ca;"></div>
<div style="left:84px;top:712px;width:1187px;height:1px;background:#c6c8ca;"></div>
<div style="left:84px;top:734px;width:1187px;height:1px;background:#c6c8ca;"></div>
<div style="left:84px;top:756px;width:1187px;height:1px;background:#c6c8ca;"></div>
<div style="left:84px;top:778px;width:1187px;height:1px;background:#c6c8ca;"></div>
<div style="left:84px;top:800px;width:1187px;height:1px;background:#c6c8ca;"></div>
<div style="left:84px;top:822px;width:1187px;height:1px;background:#c6c8ca;"></div>
<div style="left:84px;top:844px;width:1187px;height:1px;background:#c6c8ca;"></div>
<div style="left:84px;top:866px;width:1187px;height:1px;background:#c6c8ca;"></div>
<div style="left:84px;top:888px;width:1187px;height:1px;background:#c6c8ca;"></div>
<div style="left:84px;top:910px;width:1187px;height:1px;background:#c6c8ca;"></div>
<span class="t" style="left:89px;top:665.15px;font-size:14px;line-height:16px;color:#444;letter-spacing:-0.2px;">#</span>
<span class="t" style="left:110px;top:665.15px;font-size:14px;line-height:16px;color:#3c3c3c;letter-spacing:0px;">Property Code</span>
<span class="t" style="left:210px;top:665.15px;font-size:14px;line-height:16px;color:#3c3c3c;letter-spacing:0px;">Property Name</span>
<span class="t" style="left:330px;top:665.15px;font-size:14px;line-height:16px;color:#3c3c3c;letter-spacing:0px;">Expression</span>
<span class="t" style="left:450px;top:665.15px;font-size:14px;line-height:16px;color:#3c3c3c;letter-spacing:-0.3px;">Range Value ...</span>
<span class="t" style="left:550px;top:665.15px;font-size:14px;line-height:16px;color:#3c3c3c;letter-spacing:-0.3px;">Range Value ...</span>
<span class="t" style="left:650px;top:665.15px;font-size:14px;line-height:16px;color:#3c3c3c;letter-spacing:0px;">UoM</span>
<span class="t" style="left:731px;top:665.15px;font-size:14px;line-height:16px;color:#3c3c3c;letter-spacing:-0.15px;">Reference C...</span>
<span class="t" style="left:831px;top:665.15px;font-size:14px;line-height:16px;color:#3c3c3c;letter-spacing:-0.15px;">Reference Name</span>
<span class="t" style="left:951px;top:665.15px;font-size:14px;line-height:16px;color:#3c3c3c;letter-spacing:0px;">Remarks</span>
<span class="t" style="left:1051px;top:665.15px;font-size:14px;line-height:16px;color:#3c3c3c;letter-spacing:0px;">Add Date</span>
<span class="t" style="left:1151px;top:665.15px;font-size:14px;line-height:16px;color:#3c3c3c;letter-spacing:0px;">Update Date</span>
<span class="t" style="left:87px;top:693.65px;font-size:14px;line-height:16px;color:#1a1a1a;letter-spacing:0.15px;max-width:18px;overflow:hidden;">1</span>
<svg class="lk" style="left:108px;top:695.5px" width="15" height="11" viewBox="0 0 15 11"><path d="M0.5 3.85 H8.2 V0.8 H9.4 L13.7 5.3 L9.4 9.8 H8.2 V6.75 H0.5 Z" fill="#eda610" stroke="#7a5c14" stroke-width="0.9" stroke-linejoin="round"/></svg>
<span class="t" style="left:129px;top:693.65px;font-size:14px;line-height:16px;color:#1a1a1a;letter-spacing:0px;">01</span>
<span class="t" style="left:208px;top:693.65px;font-size:14px;line-height:16px;color:#1a1a1a;letter-spacing:-0.2px;max-width:117px;overflow:hidden;">Vapour Density</span>
<span class="t" style="left:328px;top:693.65px;font-size:14px;line-height:16px;color:#1a1a1a;letter-spacing:-0.2px;max-width:117px;overflow:hidden;">Equal</span>
<svg class="lk" style="left:426px;top:695px" width="16" height="9" viewBox="0 0 16 9"><path d="M0 0 H16 L8 8.6 Z" fill="#333"/></svg>
<span class="t" style="left:448px;top:693.65px;font-size:14px;line-height:16px;color:#1a1a1a;letter-spacing:0.15px;max-width:97px;overflow:hidden;">3.380</span>
<span class="t" style="left:548px;top:693.65px;font-size:14px;line-height:16px;color:#1a1a1a;letter-spacing:0.15px;max-width:97px;overflow:hidden;">0.000</span>
<span class="t" style="left:648px;top:693.65px;font-size:14px;line-height:16px;color:#1a1a1a;letter-spacing:-0.2px;max-width:78px;overflow:hidden;">Air=10</span>
<span class="t" style="left:1049px;top:693.65px;font-size:14px;line-height:16px;color:#1a1a1a;letter-spacing:0.15px;max-width:97px;overflow:hidden;">18.04.2012</span>
<span class="t" style="left:87px;top:715.65px;font-size:14px;line-height:16px;color:#1a1a1a;letter-spacing:0.15px;max-width:18px;overflow:hidden;">2</span>
<svg class="lk" style="left:108px;top:717.5px" width="15" height="11" viewBox="0 0 15 11"><path d="M0.5 3.85 H8.2 V0.8 H9.4 L13.7 5.3 L9.4 9.8 H8.2 V6.75 H0.5 Z" fill="#eda610" stroke="#7a5c14" stroke-width="0.9" stroke-linejoin="round"/></svg>
<span class="t" style="left:129px;top:715.65px;font-size:14px;line-height:16px;color:#1a1a1a;letter-spacing:0px;">02</span>
<span class="t" style="left:208px;top:715.65px;font-size:14px;line-height:16px;color:#1a1a1a;letter-spacing:-0.2px;max-width:117px;overflow:hidden;">Specific Gravity @20</span>
<span class="t" style="left:328px;top:715.65px;font-size:14px;line-height:16px;color:#1a1a1a;letter-spacing:-0.2px;max-width:117px;overflow:hidden;">Equal</span>
<svg class="lk" style="left:426px;top:717px" width="16" height="9" viewBox="0 0 16 9"><path d="M0 0 H16 L8 8.6 Z" fill="#333"/></svg>
<span class="t" style="left:448px;top:715.65px;font-size:14px;line-height:16px;color:#1a1a1a;letter-spacing:0.15px;max-width:97px;overflow:hidden;">1.840</span>
<span class="t" style="left:548px;top:715.65px;font-size:14px;line-height:16px;color:#1a1a1a;letter-spacing:0.15px;max-width:97px;overflow:hidden;">0.000</span>
<span class="t" style="left:1049px;top:715.65px;font-size:14px;line-height:16px;color:#1a1a1a;letter-spacing:0.15px;max-width:97px;overflow:hidden;">18.04.2012</span>
<span class="t" style="left:87px;top:737.65px;font-size:14px;line-height:16px;color:#1a1a1a;letter-spacing:0.15px;max-width:18px;overflow:hidden;">3</span>
<svg class="lk" style="left:108px;top:739.5px" width="15" height="11" viewBox="0 0 15 11"><path d="M0.5 3.85 H8.2 V0.8 H9.4 L13.7 5.3 L9.4 9.8 H8.2 V6.75 H0.5 Z" fill="#eda610" stroke="#7a5c14" stroke-width="0.9" stroke-linejoin="round"/></svg>
<span class="t" style="left:129px;top:737.65px;font-size:14px;line-height:16px;color:#1a1a1a;letter-spacing:0px;">03</span>
<span class="t" style="left:208px;top:737.65px;font-size:14px;line-height:16px;color:#1a1a1a;letter-spacing:-0.2px;max-width:117px;overflow:hidden;">Solubility in Water</span>
<span class="t" style="left:328px;top:737.65px;font-size:14px;line-height:16px;color:#1a1a1a;letter-spacing:-0.2px;max-width:117px;overflow:hidden;">Equal</span>
<svg class="lk" style="left:426px;top:739px" width="16" height="9" viewBox="0 0 16 9"><path d="M0 0 H16 L8 8.6 Z" fill="#333"/></svg>
<span class="t" style="left:448px;top:737.65px;font-size:14px;line-height:16px;color:#1a1a1a;letter-spacing:0.15px;max-width:97px;overflow:hidden;">0.000</span>
<span class="t" style="left:548px;top:737.65px;font-size:14px;line-height:16px;color:#1a1a1a;letter-spacing:0.15px;max-width:97px;overflow:hidden;">0.000</span>
<svg class="lk" style="left:729px;top:739.5px" width="15" height="11" viewBox="0 0 15 11"><path d="M0.5 3.85 H8.2 V0.8 H9.4 L13.7 5.3 L9.4 9.8 H8.2 V6.75 H0.5 Z" fill="#eda610" stroke="#7a5c14" stroke-width="0.9" stroke-linejoin="round"/></svg>
<span class="t" style="left:750px;top:737.65px;font-size:14px;line-height:16px;color:#1a1a1a;letter-spacing:0px;">04</span>
<span class="t" style="left:829px;top:737.65px;font-size:14px;line-height:16px;color:#1a1a1a;letter-spacing:-0.2px;max-width:117px;overflow:hidden;">Yes</span>
<span class="t" style="left:1049px;top:737.65px;font-size:14px;line-height:16px;color:#1a1a1a;letter-spacing:0.15px;max-width:97px;overflow:hidden;">18.04.2012</span>
<span class="t" style="left:87px;top:759.65px;font-size:14px;line-height:16px;color:#1a1a1a;letter-spacing:0.15px;max-width:18px;overflow:hidden;">4</span>
<svg class="lk" style="left:108px;top:761.5px" width="15" height="11" viewBox="0 0 15 11"><path d="M0.5 3.85 H8.2 V0.8 H9.4 L13.7 5.3 L9.4 9.8 H8.2 V6.75 H0.5 Z" fill="#eda610" stroke="#7a5c14" stroke-width="0.9" stroke-linejoin="round"/></svg>
<span class="t" style="left:129px;top:759.65px;font-size:14px;line-height:16px;color:#1a1a1a;letter-spacing:0px;">04</span>
<span class="t" style="left:208px;top:759.65px;font-size:14px;line-height:16px;color:#1a1a1a;letter-spacing:-0.2px;max-width:117px;overflow:hidden;">Vapour Pressure</span>
<span class="t" style="left:328px;top:759.65px;font-size:14px;line-height:16px;color:#1a1a1a;letter-spacing:-0.2px;max-width:117px;overflow:hidden;">Less than</span>
<svg class="lk" style="left:426px;top:761px" width="16" height="9" viewBox="0 0 16 9"><path d="M0 0 H16 L8 8.6 Z" fill="#333"/></svg>
<span class="t" style="left:448px;top:759.65px;font-size:14px;line-height:16px;color:#1a1a1a;letter-spacing:0.15px;max-width:97px;overflow:hidden;">0.001</span>
<span class="t" style="left:548px;top:759.65px;font-size:14px;line-height:16px;color:#1a1a1a;letter-spacing:0.15px;max-width:97px;overflow:hidden;">0.000</span>
<span class="t" style="left:648px;top:759.65px;font-size:14px;line-height:16px;color:#1a1a1a;letter-spacing:-0.2px;max-width:78px;overflow:hidden;">mm Hg @20</span>
<span class="t" style="left:1049px;top:759.65px;font-size:14px;line-height:16px;color:#1a1a1a;letter-spacing:0.15px;max-width:97px;overflow:hidden;">18.04.2012</span>
<span class="t" style="left:87px;top:781.65px;font-size:14px;line-height:16px;color:#1a1a1a;letter-spacing:0.15px;max-width:18px;overflow:hidden;">5</span>
<svg class="lk" style="left:108px;top:783.5px" width="15" height="11" viewBox="0 0 15 11"><path d="M0.5 3.85 H8.2 V0.8 H9.4 L13.7 5.3 L9.4 9.8 H8.2 V6.75 H0.5 Z" fill="#eda610" stroke="#7a5c14" stroke-width="0.9" stroke-linejoin="round"/></svg>
<span class="t" style="left:129px;top:781.65px;font-size:14px;line-height:16px;color:#1a1a1a;letter-spacing:0px;">05</span>
<span class="t" style="left:208px;top:781.65px;font-size:14px;line-height:16px;color:#1a1a1a;letter-spacing:-0.2px;max-width:117px;overflow:hidden;">Odor</span>
<span class="t" style="left:328px;top:781.65px;font-size:14px;line-height:16px;color:#1a1a1a;letter-spacing:-0.2px;max-width:117px;overflow:hidden;">Greater than</span>
<svg class="lk" style="left:426px;top:783px" width="16" height="9" viewBox="0 0 16 9"><path d="M0 0 H16 L8 8.6 Z" fill="#333"/></svg>
<span class="t" style="left:448px;top:781.65px;font-size:14px;line-height:16px;color:#1a1a1a;letter-spacing:0.15px;max-width:97px;overflow:hidden;">0.000</span>
<span class="t" style="left:548px;top:781.65px;font-size:14px;line-height:16px;color:#1a1a1a;letter-spacing:0.15px;max-width:97px;overflow:hidden;">0.000</span>
<svg class="lk" style="left:729px;top:783.5px" width="15" height="11" viewBox="0 0 15 11"><path d="M0.5 3.85 H8.2 V0.8 H9.4 L13.7 5.3 L9.4 9.8 H8.2 V6.75 H0.5 Z" fill="#eda610" stroke="#7a5c14" stroke-width="0.9" stroke-linejoin="round"/></svg>
<span class="t" style="left:750px;top:781.65px;font-size:14px;line-height:16px;color:#1a1a1a;letter-spacing:0px;">07</span>
<span class="t" style="left:829px;top:781.65px;font-size:14px;line-height:16px;color:#1a1a1a;letter-spacing:-0.2px;max-width:117px;overflow:hidden;">Odorless</span>
<span class="t" style="left:1049px;top:781.65px;font-size:14px;line-height:16px;color:#1a1a1a;letter-spacing:0.15px;max-width:97px;overflow:hidden;">18.04.2012</span>
<span class="t" style="left:1149px;top:781.65px;font-size:14px;line-height:16px;color:#1a1a1a;letter-spacing:0.15px;max-width:121px;overflow:hidden;">18.04.2012</span>
<span class="t" style="left:87px;top:803.65px;font-size:14px;line-height:16px;color:#1a1a1a;letter-spacing:0.15px;max-width:18px;overflow:hidden;">6</span>
<svg class="lk" style="left:108px;top:805.5px" width="15" height="11" viewBox="0 0 15 11"><path d="M0.5 3.85 H8.2 V0.8 H9.4 L13.7 5.3 L9.4 9.8 H8.2 V6.75 H0.5 Z" fill="#eda610" stroke="#7a5c14" stroke-width="0.9" stroke-linejoin="round"/></svg>
<span class="t" style="left:129px;top:803.65px;font-size:14px;line-height:16px;color:#1a1a1a;letter-spacing:0px;">06</span>
<span class="t" style="left:208px;top:803.65px;font-size:14px;line-height:16px;color:#1a1a1a;letter-spacing:-0.2px;max-width:117px;overflow:hidden;">Appearance</span>
<span class="t" style="left:328px;top:803.65px;font-size:14px;line-height:16px;color:#1a1a1a;letter-spacing:-0.2px;max-width:117px;overflow:hidden;">Not equal</span>
<svg class="lk" style="left:426px;top:805px" width="16" height="9" viewBox="0 0 16 9"><path d="M0 0 H16 L8 8.6 Z" fill="#333"/></svg>
<span class="t" style="left:448px;top:803.65px;font-size:14px;line-height:16px;color:#1a1a1a;letter-spacing:0.15px;max-width:97px;overflow:hidden;">0.000</span>
<span class="t" style="left:548px;top:803.65px;font-size:14px;line-height:16px;color:#1a1a1a;letter-spacing:0.15px;max-width:97px;overflow:hidden;">0.000</span>
<svg class="lk" style="left:729px;top:805.5px" width="15" height="11" viewBox="0 0 15 11"><path d="M0.5 3.85 H8.2 V0.8 H9.4 L13.7 5.3 L9.4 9.8 H8.2 V6.75 H0.5 Z" fill="#eda610" stroke="#7a5c14" stroke-width="0.9" stroke-linejoin="round"/></svg>
<span class="t" style="left:750px;top:803.65px;font-size:14px;line-height:16px;color:#1a1a1a;letter-spacing:0px;">06</span>
<span class="t" style="left:829px;top:803.65px;font-size:14px;line-height:16px;color:#1a1a1a;letter-spacing:-0.2px;max-width:117px;overflow:hidden;">Oily</span>
<span class="t" style="left:1049px;top:803.65px;font-size:14px;line-height:16px;color:#1a1a1a;letter-spacing:0.15px;max-width:97px;overflow:hidden;">18.04.2012</span>
<span class="t" style="left:87px;top:825.65px;font-size:14px;line-height:16px;color:#1a1a1a;letter-spacing:0.15px;max-width:18px;overflow:hidden;">7</span>
<svg class="lk" style="left:108px;top:827.5px" width="15" height="11" viewBox="0 0 15 11"><path d="M0.5 3.85 H8.2 V0.8 H9.4 L13.7 5.3 L9.4 9.8 H8.2 V6.75 H0.5 Z" fill="#eda610" stroke="#7a5c14" stroke-width="0.9" stroke-linejoin="round"/></svg>
<span class="t" style="left:129px;top:825.65px;font-size:14px;line-height:16px;color:#1a1a1a;letter-spacing:0px;">07</span>
<span class="t" style="left:208px;top:825.65px;font-size:14px;line-height:16px;color:#1a1a1a;letter-spacing:-0.2px;max-width:117px;overflow:hidden;">Colour</span>
<span class="t" style="left:328px;top:825.65px;font-size:14px;line-height:16px;color:#1a1a1a;letter-spacing:-0.2px;max-width:117px;overflow:hidden;">Equal</span>
<svg class="lk" style="left:426px;top:827px" width="16" height="9" viewBox="0 0 16 9"><path d="M0 0 H16 L8 8.6 Z" fill="#333"/></svg>
<span class="t" style="left:448px;top:825.65px;font-size:14px;line-height:16px;color:#1a1a1a;letter-spacing:0.15px;max-width:97px;overflow:hidden;">0.000</span>
<span class="t" style="left:548px;top:825.65px;font-size:14px;line-height:16px;color:#1a1a1a;letter-spacing:0.15px;max-width:97px;overflow:hidden;">0.000</span>
<svg class="lk" style="left:729px;top:827.5px" width="15" height="11" viewBox="0 0 15 11"><path d="M0.5 3.85 H8.2 V0.8 H9.4 L13.7 5.3 L9.4 9.8 H8.2 V6.75 H0.5 Z" fill="#eda610" stroke="#7a5c14" stroke-width="0.9" stroke-linejoin="round"/></svg>
<span class="t" style="left:750px;top:825.65px;font-size:14px;line-height:16px;color:#1a1a1a;letter-spacing:0px;">03</span>
<span class="t" style="left:829px;top:825.65px;font-size:14px;line-height:16px;color:#1a1a1a;letter-spacing:-0.2px;max-width:117px;overflow:hidden;">Yellow</span>
<span class="t" style="left:1049px;top:825.65px;font-size:14px;line-height:16px;color:#1a1a1a;letter-spacing:0.15px;max-width:97px;overflow:hidden;">18.04.2012</span>
<span class="t" style="left:87px;top:847.65px;font-size:14px;line-height:16px;color:#1a1a1a;letter-spacing:0.15px;max-width:18px;overflow:hidden;">8</span>
<svg class="lk" style="left:108px;top:849.5px" width="15" height="11" viewBox="0 0 15 11"><path d="M0.5 3.85 H8.2 V0.8 H9.4 L13.7 5.3 L9.4 9.8 H8.2 V6.75 H0.5 Z" fill="#eda610" stroke="#7a5c14" stroke-width="0.9" stroke-linejoin="round"/></svg>
<span class="t" style="left:129px;top:847.65px;font-size:14px;line-height:16px;color:#1a1a1a;letter-spacing:0px;">08</span>
<span class="t" style="left:208px;top:847.65px;font-size:14px;line-height:16px;color:#1a1a1a;letter-spacing:-0.2px;max-width:117px;overflow:hidden;">Melting Point</span>
<span class="t" style="left:328px;top:847.65px;font-size:14px;line-height:16px;color:#1a1a1a;letter-spacing:-0.2px;max-width:117px;overflow:hidden;">Equal</span>
<svg class="lk" style="left:426px;top:849px" width="16" height="9" viewBox="0 0 16 9"><path d="M0 0 H16 L8 8.6 Z" fill="#333"/></svg>
<span class="t" style="left:448px;top:847.65px;font-size:14px;line-height:16px;color:#1a1a1a;letter-spacing:0.15px;max-width:97px;overflow:hidden;">10.000</span>
<span class="t" style="left:548px;top:847.65px;font-size:14px;line-height:16px;color:#1a1a1a;letter-spacing:0.15px;max-width:97px;overflow:hidden;">0.000</span>
<span class="t" style="left:648px;top:847.65px;font-size:14px;line-height:16px;color:#1a1a1a;letter-spacing:-0.2px;max-width:78px;overflow:hidden;">DegC</span>
<span class="t" style="left:1049px;top:847.65px;font-size:14px;line-height:16px;color:#1a1a1a;letter-spacing:0.15px;max-width:97px;overflow:hidden;">18.04.2012</span>
<span class="t" style="left:1149px;top:847.65px;font-size:14px;line-height:16px;color:#1a1a1a;letter-spacing:0.15px;max-width:121px;overflow:hidden;">18.04.2012</span>
<span class="t" style="left:87px;top:869.65px;font-size:14px;line-height:16px;color:#1a1a1a;letter-spacing:0.15px;max-width:18px;overflow:hidden;">9</span>
<svg class="lk" style="left:108px;top:871.5px" width="15" height="11" viewBox="0 0 15 11"><path d="M0.5 3.85 H8.2 V0.8 H9.4 L13.7 5.3 L9.4 9.8 H8.2 V6.75 H0.5 Z" fill="#eda610" stroke="#7a5c14" stroke-width="0.9" stroke-linejoin="round"/></svg>
<span class="t" style="left:129px;top:869.65px;font-size:14px;line-height:16px;color:#1a1a1a;letter-spacing:0px;">09</span>
<span class="t" style="left:208px;top:869.65px;font-size:14px;line-height:16px;color:#1a1a1a;letter-spacing:-0.2px;max-width:117px;overflow:hidden;">Boiling Point</span>
<span class="t" style="left:328px;top:869.65px;font-size:14px;line-height:16px;color:#1a1a1a;letter-spacing:-0.2px;max-width:117px;overflow:hidden;">Equal</span>
<svg class="lk" style="left:426px;top:871px" width="16" height="9" viewBox="0 0 16 9"><path d="M0 0 H16 L8 8.6 Z" fill="#333"/></svg>
<span class="t" style="left:448px;top:869.65px;font-size:14px;line-height:16px;color:#1a1a1a;letter-spacing:0.15px;max-width:97px;overflow:hidden;">290.000</span>
<span class="t" style="left:548px;top:869.65px;font-size:14px;line-height:16px;color:#1a1a1a;letter-spacing:0.15px;max-width:97px;overflow:hidden;">0.000</span>
<span class="t" style="left:648px;top:869.65px;font-size:14px;line-height:16px;color:#1a1a1a;letter-spacing:-0.2px;max-width:78px;overflow:hidden;">DegC</span>
<span class="t" style="left:1049px;top:869.65px;font-size:14px;line-height:16px;color:#1a1a1a;letter-spacing:0.15px;max-width:97px;overflow:hidden;">18.04.2012</span>
<span class="t" style="left:1149px;top:869.65px;font-size:14px;line-height:16px;color:#1a1a1a;letter-spacing:0.15px;max-width:121px;overflow:hidden;">18.04.2012</span>
<svg class="ov" width="1320" height="888" viewBox="0 0 1320 888">
<defs>
<filter id="sh" x="-5%" y="-20%" width="110%" height="150%"><feGaussianBlur in="SourceAlpha" stdDeviation="2"/><feOffset dx="1.5" dy="2.5"/><feComponentTransfer><feFuncA type="linear" slope="0.45"/></feComponentTransfer><feMerge><feMergeNode/><feMergeNode in="SourceGraphic"/></feMerge></filter>
<filter id="sh2" filterUnits="userSpaceOnUse" x="0" y="0" width="1320" height="888"><feGaussianBlur in="SourceAlpha" stdDeviation="1.6"/><feOffset dx="1.5" dy="1.5"/><feComponentTransfer><feFuncA type="linear" slope="0.28"/></feComponentTransfer><feMerge><feMergeNode/><feMergeNode in="SourceGraphic"/></feMerge></filter>
</defs>
<g filter="url(#sh)" fill="none" stroke-linecap="round">
<rect x="171.7" y="74.7" width="198.6" height="25.6" rx="4.5" stroke="#df2129" stroke-width="3.4"/>
<rect x="229.7" y="531.2" width="261.6" height="35.6" rx="5" stroke="#df2129" stroke-width="3.4"/>
</g>
<g fill="none" filter="url(#sh2)">
<path d="M318 530 L241.5 112" stroke="#df2129" stroke-width="3.2"/>
<path d="M240.2 103 L245 111.6 L237.6 113 Z" fill="#df2129" stroke="none"/>
</g>
<g filter="url(#sh)" fill="none">
<rect x="114" y="325.5" width="620" height="54.8" rx="9" stroke="#27419a" stroke-width="3"/>
<rect x="99.8" y="780.3" width="344.2" height="42.6" rx="7" stroke="#27419a" stroke-width="3"/>
</g>
<g fill="none" filter="url(#sh2)">
<path d="M381 779 L598 389.5" stroke="#2a46a2" stroke-width="3"/>
<path d="M601.4 383.6 L601 393.6 L594.2 389.8 Z" fill="#2a46a2" stroke="none"/>
</g>
</svg>
<div style="left:0px;top:0px;width:1320px;height:1px;background:#0a0a0a;"></div>
<div style="left:1px;top:1px;width:1154px;height:1px;background:#d6c6a8;"></div>
<div style="left:1319px;top:0px;width:1px;height:888px;background:#0a0a0a;"></div>
<div style="left:1318px;top:479px;width:1px;height:409px;background:#141c26;"></div>
<div style="left:0px;top:887px;width:1320px;height:1px;background:#0a0a0a;"></div>
<div style="left:0px;top:0px;width:1px;height:888px;background:#0a0a0a;"></div>
</div></body></html>
